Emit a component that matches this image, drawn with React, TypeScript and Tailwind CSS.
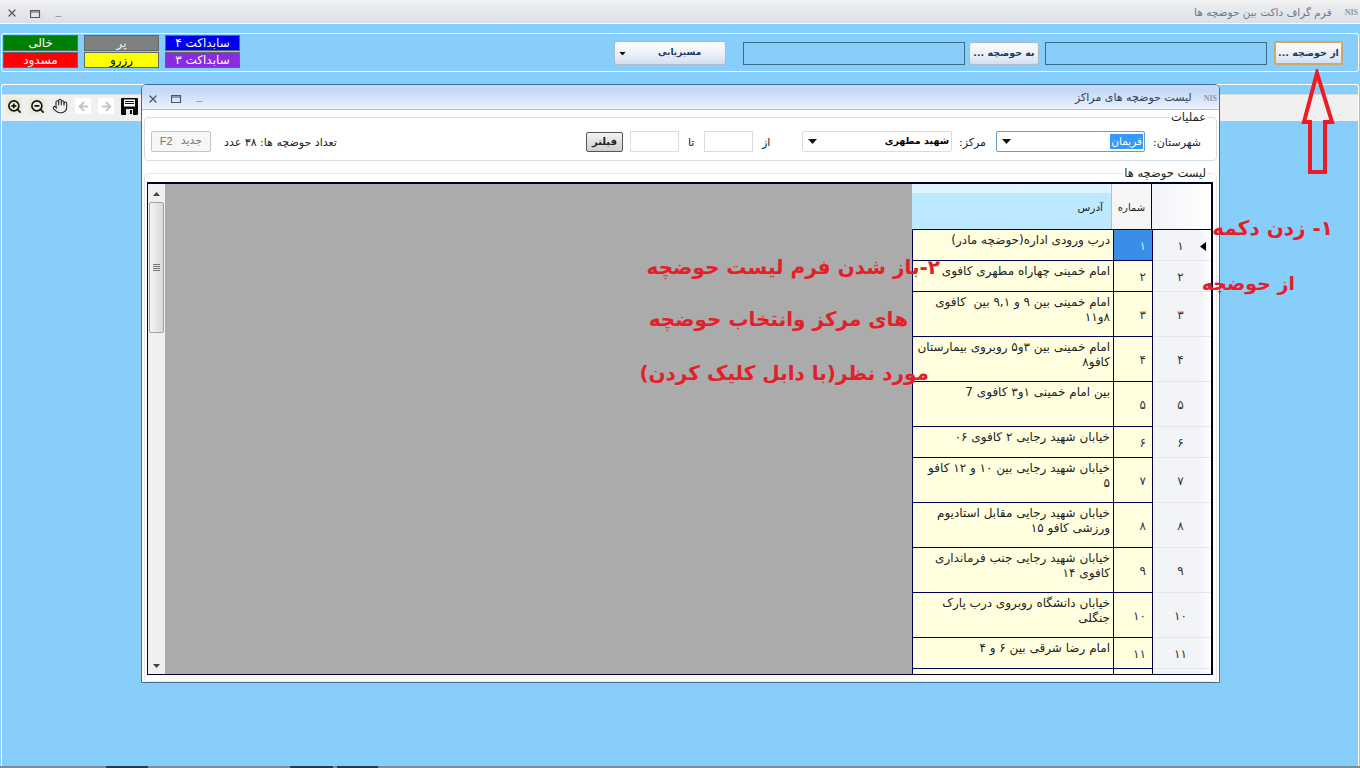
import React from "react";
import { ZoomIn, ZoomOut, Hand, ArrowLeft, ArrowRight, Minus, X } from "lucide-react";

const font = "font-['DejaVu_Sans',sans-serif]";

const rows = [
  { n: "۱", h: "h-[31px]", lines: ["درب ورودی اداره(حوضچه مادر)"], sel: true },
  { n: "۲", h: "h-[31px]", lines: ["امام خمینی چهاراه مطهری کافوی"] },
  { n: "۳", h: "h-[45px]", lines: ["امام خمینی بین ۹ و ۹,۱ بین  کافوی", "۸و۱۱"] },
  { n: "۴", h: "h-[45px]", lines: ["امام خمینی بین ۳و۵ روبروی بیمارستان", "کافو۸  "] },
  { n: "۵", h: "h-[45px]", lines: ["بین امام خمینی ۱و۳ کافوی 7"] },
  { n: "۶", h: "h-[31px]", lines: ["خیابان شهید رجایی ۲ کافوی ۰۶"] },
  { n: "۷", h: "h-[45px]", lines: ["خیابان شهید رجایی بین ۱۰ و ۱۲ کافو", "۵  "] },
  { n: "۸", h: "h-[45px]", lines: ["خیابان شهید رجایی مقابل استادیوم", "ورزشی کافو ۱۵"] },
  { n: "۹", h: "h-[45px]", lines: ["خیابان شهید رجایی جنب فرمانداری", "کافوی ۱۴"] },
  { n: "۱۰", h: "h-[45px]", lines: ["خیابان دانشگاه روبروی درب پارک", "جنگلی"] },
  { n: "۱۱", h: "h-[31px]", lines: ["امام رضا شرقی بین ۶ و ۴"] },
  { n: "۱۲", h: "h-[31px]", lines: ["امام رضا شرقی بین ۶ و ۴ کافوی ۱۳"] },
];

function Swatch({ label, cls }: { label: string; cls: string }) {
  return (
    <div className={`h-[16px] w-[75px] flex items-center justify-center text-[12px] leading-none border border-[#5a6a70] ${cls}`}>
      {label}
    </div>
  );
}

function Caret({ cls = "" }: { cls?: string }) {
  return (
    <svg width="9" height="5" viewBox="0 0 9 5" className={cls}>
      <path d="M0 0h9L4.5 5z" fill="#111" />
    </svg>
  );
}

function Floppy() {
  return (
    <svg width="17" height="17" viewBox="0 0 17 17">
      <path d="M0 1a1 1 0 0 1 1-1h15a1 1 0 0 1 1 1v15a1 1 0 0 1-1 1H1a1 1 0 0 1-1-1z" fill="#0b0b0b" />
      <path d="M3 1.5h11v7H3z" fill="#fff" />
      <path d="M4 3h9v1H4zM4 5h9v1H4z" fill="#111" />
      <path d="M5 11h7v6H5z" fill="#e8e8e8" />
      <path d="M9 12h2v4H9z" fill="#111" />
    </svg>
  );
}

function WinButtons({ color = "#555" }: { color?: string }) {
  return (
    <div className="flex items-center">
      <X size={12} strokeWidth={2.4} color={color} />
      <svg width="11" height="9" viewBox="0 0 11 9" className="ml-[12px]">
        <path d="M.5 1.5h9v7h-9zM.5 3h9" fill="none" stroke={color} strokeWidth="1.2" />
      </svg>
      <Minus size={9} strokeWidth={2} color="#888" className="ml-[13px] mt-[6px]" />
    </div>
  );
}

export default function App() {
  return (
    <div dir="ltr" className={`relative w-[1360px] h-[768px] overflow-hidden bg-[#87cefa] flex flex-col ${font} text-[11px] text-[#222]`}>
      {/* Main title bar */}
      <div className="h-[24px] shrink-0 border-b border-white border-t-[3px] border-t-[#f2f2f2] bg-gradient-to-b from-[#eceef1] to-[#dcdfe6] flex items-center justify-between pl-[6px] pr-[2px]">
        <WinButtons />
        <div className="flex items-center text-[#6b7a8a]">
          <span dir="rtl" className="text-[10.5px] mr-[13px]">فرم گراف داکت بین حوضچه ها</span>
          <span className="font-['Liberation_Serif',serif] text-[8px] text-[#8a98a8] font-bold">NIS</span>
        </div>
      </div>

      {/* Upper tool panel */}
      <div className="mt-[9px] mx-[1px] h-[39px] shrink-0 rounded-[3px] border border-white flex items-center pl-[1px] pr-[15px]">
        <div className="flex gap-[6px] -mt-[2px]">
          <div className="flex flex-col gap-[1px]">
            <Swatch label="خالی" cls="bg-[#008000] text-white" />
            <Swatch label="مسدود" cls="bg-[#ff0000] text-white" />
          </div>
          <div className="flex flex-col gap-[1px]">
            <Swatch label="پر" cls="bg-[#808080] text-[#eee]" />
            <Swatch label="رزرو" cls="bg-[#ffff00] text-black" />
          </div>
          <div className="flex flex-col gap-[1px]">
            <Swatch label="سابداکت ۴" cls="bg-[#0000ee] text-white" />
            <Swatch label="سابداکت ۳" cls="bg-[#8a2be2] text-white" />
          </div>
        </div>
        <div className="ml-[374px] w-[112px] h-[24px] mt-[1px] rounded-[3px] border border-[#a8bccc] bg-gradient-to-b from-[#fbfcfe] via-[#eef2f8] to-[#d4dfee] flex items-center pl-[3px]">
          <Caret cls="scale-75" />
          <span className="ml-[31px] text-[9px] font-bold text-[#1c3a6a]">مسیریابی</span>
        </div>
        <div className="ml-[17px] w-[222px] h-[23px] mt-[1px] border border-[#3d6a86]" />
        <div className="ml-[4px] w-[70px] h-[23px] mt-[1px] rounded-[3px] border border-[#a8bccc] bg-gradient-to-b from-[#fbfcfe] via-[#eef2f8] to-[#d4dfee] flex items-center justify-center text-[9.5px] font-bold text-[#1c3a6a]">
          <span dir="rtl">به حوضچه ...</span>
        </div>
        <div className="ml-[6px] w-[222px] h-[23px] mt-[1px] border border-[#3d6a86]" />
        <div className="ml-[7px] w-[69px] h-[24px] mt-[1px] rounded-[2px] border-2 border-[#d0a868] bg-gradient-to-b from-[#fbfcfe] via-[#eef2f8] to-[#d4dfee] flex items-center justify-center text-[9.5px] font-bold text-[#1c3a6a]">
          <span dir="rtl">از حوضچه ...</span>
        </div>
      </div>

      {/* Lower work panel */}
      <div className="mt-[12px] mx-[1px] flex-1 min-h-0 rounded-t-[3px] border-x border-t border-white pt-[9px]">
        <div className="h-[27px] bg-[#f0f0f0] border-t border-[#d8d8d8] flex items-center pl-[4px] pb-[4px]">
          <div className="w-[16px] h-[16px] bg-[#ecebd8] flex items-center justify-center"><ZoomIn size={15} strokeWidth={2.6} color="#111" /></div>
          <div className="ml-[7px] w-[16px] h-[16px] bg-[#ecebd8] flex items-center justify-center"><ZoomOut size={15} strokeWidth={2.6} color="#111" /></div>
          <Hand size={16} strokeWidth={1.6} color="#222" className="ml-[7px]" />
          <div className="ml-[7px] w-[16px] h-[16px] bg-white flex items-center justify-center"><ArrowLeft size={13} strokeWidth={3.5} color="#c4c4c4" /></div>
          <div className="ml-[7px] w-[16px] h-[16px] bg-white flex items-center justify-center"><ArrowRight size={13} strokeWidth={3.5} color="#c4c4c4" /></div>
          <div className="ml-[7px]"><Floppy /></div>
        </div>
      </div>

      {/* Status edge */}
      <div className="h-[2px] shrink-0 bg-[#7d8c98] flex">
        <div className="ml-[106px] w-[42px] bg-[#2a3a48]" />
        <div className="ml-[142px] w-[43px] bg-[#2a3a48]" />
        <div className="ml-[4px] w-[41px] bg-[#2a3a48]" />
      </div>

      {/* Modal window */}
      <div className="absolute left-[141px] top-[84px] w-[1079px] h-[599px] rounded-t-[5px] border border-[#3f6f92] bg-white flex flex-col">
        <div className="h-[25px] shrink-0 border-b border-[#a9c9cf] rounded-t-[4px] bg-gradient-to-b from-[#c4d9f7] from-[25%] to-[#edf3fd] flex items-center justify-between pl-[5px] pr-[2px] pt-[3px]">
          <WinButtons color="#4a5668" />
          <div className="flex items-center">
            <span dir="rtl" className="text-[11px] mr-[12px] text-[#33404e]">لیست حوضچه های مراکز</span>
            <span className="font-['Liberation_Serif',serif] text-[8px] text-[#8a98a8] font-bold">NIS</span>
          </div>
        </div>

        {/* Operations */}
        <fieldset className="mx-[2px] mt-[1px] h-[50px] shrink-0 rounded-[4px] border border-[#d5e0e6]">
          <legend dir="rtl" className="ml-auto mr-[9px] px-[1px] leading-[12px] text-[11.5px]">عملیات</legend>
          <div className="flex items-center h-[21px] mt-[8px] pl-[6px]">
            <div className="w-[60px] h-[21px] rounded-[2px] border border-[#c4c4c4] bg-[#f6f6f6] flex items-center justify-center gap-[8px] text-[#777] text-[11px]">
              <span className="font-['Liberation_Sans',sans-serif]">F2</span>
              <span dir="rtl">جدید</span>
            </div>
            <span dir="rtl" className="ml-[13px] mt-[4px] w-[114px] text-left whitespace-nowrap">تعداد حوضچه ها: ۳۸ عدد</span>
            <div className="ml-[248px] w-[37px] h-[20px] rounded-[2px] border border-[#555] bg-gradient-to-b from-[#f4f4f4] to-[#cfcfcf] flex items-center justify-center text-[10px] font-bold text-[#222]">فیلتر</div>
            <div className="ml-[7px] w-[49px] h-[21px] border border-[#dcdcdc]" />
            <span className="ml-[9px] mt-[4px] w-[16px] text-left">تا</span>
            <div className="w-[49px] h-[21px] border border-[#dcdcdc]" />
            <span className="ml-[9px] mt-[4px] w-[40px] text-left">از</span>
            <div className="w-[150px] h-[21px] rounded-[2px] border border-[#dcdcdc] flex items-center justify-between pl-[5px] pr-[2px]">
              <Caret />
              <span className="font-bold text-black text-[9.5px]">شهید مطهری</span>
            </div>
            <span dir="rtl" className="ml-[9px] mt-[4px] w-[25px] text-left">مرکز:</span>
            <div className="ml-[10px] w-[149px] h-[21px] rounded-[2px] border border-[#6a9cc0] flex items-center justify-between pl-[5px] pr-[1px]">
              <Caret />
              <span className="bg-[#3399ff] text-white px-[1px] text-[10.5px] leading-[15px]">فریمان</span>
            </div>
            <span dir="rtl" className="ml-[8px] mt-[4px] whitespace-nowrap">شهرستان:</span>
          </div>
        </fieldset>

        {/* List */}
        <fieldset className="mx-[2px] mt-[6px] flex-1 min-h-0 rounded-[4px] border border-[#e2e8ec] overflow-hidden">
          <legend dir="rtl" className="ml-auto mr-[9px] px-[1px] leading-[12px] text-[11.5px]">لیست حوضچه ها</legend>
          <div className="mt-[3px] ml-[2px] w-[1066px] h-[493px] border-t-2 border-b border-l border-r-2 border-[#000030] flex overflow-hidden">
            {/* scrollbar */}
            <div className="w-[17px] shrink-0 bg-[#f0f0f0] flex flex-col items-center relative">
              <svg width="7" height="4" viewBox="0 0 7 4" className="mt-[8px]"><path d="M3.5 0 7 4H0z" fill="#444" /></svg>
              <div className="mt-[6px] w-[15px] h-[131px] rounded-[2px] border border-[#9aa4ad] bg-gradient-to-r from-[#f4f4f4] to-[#d8d8d8] flex flex-col items-center justify-center gap-[1px]">
                <div className="w-[7px] h-px bg-[#777]" />
                <div className="w-[7px] h-px bg-[#777]" />
                <div className="w-[7px] h-px bg-[#777]" />
                <div className="w-[7px] h-px bg-[#777]" />
              </div>
              <svg width="7" height="4" viewBox="0 0 7 4" className="mt-auto mb-[6px]"><path d="M0 0h7L3.5 4z" fill="#444" /></svg>
            </div>
            {/* empty grid area */}
            <div className="w-[747px] shrink-0 bg-[#ababab]" />
            {/* data */}
            <div className="flex-1 min-w-0 flex flex-col">
              <div className="h-[46px] shrink-0 flex border-b border-[#000050]">
                <div dir="rtl" className="w-[200px] shrink-0 bg-gradient-to-b from-[#dff4ff] from-[20%] to-[#bce9ff] to-[20%] flex items-center px-[8px] pt-[2px] text-[10.5px] border-r border-[#9cc]">آدرس</div>
                <div className="w-[40px] shrink-0 bg-[#f5f5f5] flex items-center justify-center pt-[2px] text-[10px] border-r border-[#000050]">شماره</div>
                <div className="flex-1 bg-gradient-to-r from-[#f2f4f8] to-white" />
              </div>
              {rows.map((r) => (
                <div key={r.n} className={`${r.h} shrink-0 flex border-b border-[#000050]`}>
                  <div dir="rtl" className="w-[201px] shrink-0 bg-[#ffffe0] border-l border-[#000050] pr-[3px] pt-[3px] leading-[15px] text-[12px] text-[#222]">
                    {r.lines.map((l, i) => (
                      <div key={i} className="whitespace-pre">{l}</div>
                    ))}
                  </div>
                  <div className={`w-[40px] shrink-0 border-l border-r border-[#000050] text-[12px] flex items-center justify-end pr-[6px] pt-[2px] ${r.sel ? "bg-[#3a8ee8] text-[#cfe4fa]" : "bg-[#ffffe0] text-[#333]"}`}>
                    {r.n}
                  </div>
                  <div className="flex-1 relative bg-gradient-to-r from-[#f2f4f8] from-[80%] to-white flex items-center justify-center pr-[3px] pt-[2px] text-[12px] text-[#333] -mb-px border-b border-[#e4e6ea]">
                    {r.n}
                    {r.sel && (
                      <svg width="6" height="9" viewBox="0 0 6 9" className="absolute right-[5px] top-[12px]"><path d="M6 0v9L0 4.5z" fill="#000" /></svg>
                    )}
                  </div>
                </div>
              ))}
            </div>
          </div>
        </fieldset>
      </div>

      {/* Red annotations */}
      <svg width="40" height="105" viewBox="0 0 40 105" className="absolute left-[1298px] top-[69px]">
        <path d="M19 4 6 53H12v50h15V53h7z" fill="none" stroke="#ed1c24" strokeWidth="4" />
      </svg>
      <div dir="rtl" className="absolute left-[1203px] top-[213px] w-[130px] text-[#e3202a] text-[20px] font-bold leading-[30px] whitespace-nowrap text-right">۱- زدن دکمه</div>
      <div dir="rtl" className="absolute left-[1203px] top-[268px] w-[92px] text-[#e3202a] text-[19px] font-bold leading-[30px] whitespace-nowrap text-right">از حوضچه</div>
      <div dir="rtl" className="absolute left-[640px] top-[252px] w-[300px] text-[#e3202a] text-[20px] font-bold leading-[30px] whitespace-nowrap text-right">۲-باز شدن فرم لیست حوضچه</div>
      <div dir="rtl" className="absolute left-[640px] top-[304px] w-[268px] text-[#e3202a] text-[20px] font-bold leading-[30px] whitespace-nowrap text-right">های مرکز وانتخاب حوضچه</div>
      <div dir="rtl" className="absolute left-[630px] top-[358px] w-[299px] text-[#e3202a] text-[20px] font-bold leading-[30px] whitespace-nowrap text-right">مورد نظر(با دابل کلیک کردن)</div>
    </div>
  );
}
